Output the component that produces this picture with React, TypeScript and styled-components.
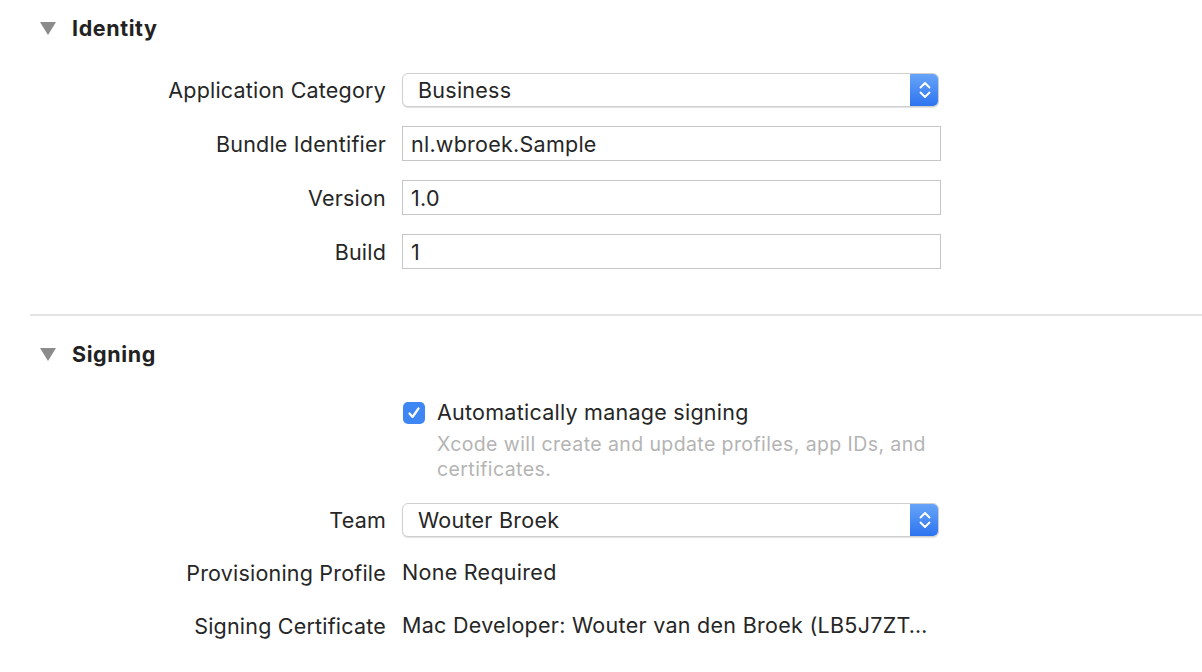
import React from "react";
import styled, { createGlobalStyle } from "styled-components";

const Global = createGlobalStyle`
  html, body {
    margin: 0;
    padding: 0;
    background: #ffffff;
  }
  body {
    font-family: Inter, "Noto Sans", "Liberation Sans", sans-serif;
    color: #262626;
    -webkit-font-smoothing: antialiased;
  }
`;

const Page = styled.div`
  width: 1202px;
  height: 672px;
  overflow: hidden;
  display: flex;
  flex-direction: column;
`;

const SectionHeader = styled.div<{ $top: number }>`
  display: flex;
  align-items: center;
  height: 40px;
  margin-top: ${(p) => p.$top}px;
  padding-left: 40px;
  gap: 16px;
`;

const Disclosure = styled.span`
  width: 0;
  height: 0;
  border-left: 8.5px solid transparent;
  border-right: 8.5px solid transparent;
  border-top: 13px solid #8b8b8b;
`;

const Title = styled.h2`
  margin: 0;
  font-size: 21.5px;
  font-weight: 700;
  color: #222222;
  letter-spacing: 0.6px;
`;

const Divider = styled.hr`
  margin: 45px 0 0 30px;
  border: none;
  height: 2px;
  background: #e4e4e4;
`;

const Form = styled.div<{ $top: number; $gap: number }>`
  display: grid;
  grid-template-columns: 386px 539px;
  column-gap: 16px;
  row-gap: ${(p) => p.$gap}px;
  margin-top: ${(p) => p.$top}px;
  align-items: center;
`;

const Label = styled.div`
  font-size: 21.5px;
  letter-spacing: 0.2px;
  text-align: right;
  color: #262626;
  white-space: nowrap;
`;

const Popup = styled.div`
  position: relative;
  width: 537px;
  height: 34px;
  box-sizing: border-box;
  border: 1px solid #cfcfcf;
  border-radius: 6px;
  background: #ffffff;
  box-shadow: 0 1px 1px rgba(0, 0, 0, 0.12);
  display: flex;
  align-items: center;
  overflow: hidden;
`;

const PopupText = styled.span`
  flex: 1;
  padding-left: 15px;
  font-size: 21.5px;
  letter-spacing: 0.25px;
  color: #262626;
`;

const Stepper = styled.span`
  width: 29px;
  align-self: stretch;
  margin: -1px -1px -1px 0;
  background: linear-gradient(#69a6f8, #2b72ef);
  display: flex;
  align-items: center;
  justify-content: center;
`;

const Field = styled.div`
  height: 35px;
  box-sizing: border-box;
  border: 1px solid #c6c6c6;
  background: #ffffff;
  padding-left: 8px;
  display: flex;
  align-items: center;
  font-size: 21.5px;
  letter-spacing: 0.25px;
  color: #262626;
`;

const Value = styled.div`
  font-size: 21.5px;
  letter-spacing: 0.28px;
  color: #262626;
  white-space: nowrap;
  overflow: hidden;
  text-overflow: ellipsis;
  height: 35px;
  line-height: 35px;
`;

const CheckBlock = styled.div`
  display: grid;
  grid-template-columns: 22px auto;
  column-gap: 12px;
  row-gap: 7px;
  margin-left: 403px;
  margin-top: 26px;
  width: 540px;
`;

const Check = styled.span`
  width: 22px;
  height: 22px;
  border-radius: 5px;
  background: #3f86f5;
  display: flex;
  align-items: center;
  justify-content: center;
  align-self: center;
`;

const CheckLabel = styled.div`
  font-size: 21.5px;
  letter-spacing: 0.25px;
  line-height: 25px;
  color: #262626;
`;

const Hint = styled.div`
  grid-column: 2;
  font-size: 19.5px;
  letter-spacing: 0.4px;
  line-height: 25px;
  color: #b4b4b4;
`;

const Chevrons = () => (
  <svg width="14" height="24" viewBox="0 0 14 24" fill="none">
    <path d="M2.5 9.5 L7 5 L11.5 9.5" stroke="#fff" strokeWidth="1.9" strokeLinecap="round" strokeLinejoin="round" />
    <path d="M2.5 14.5 L7 19 L11.5 14.5" stroke="#fff" strokeWidth="1.9" strokeLinecap="round" strokeLinejoin="round" />
  </svg>
);

const Tick = () => (
  <svg width="16" height="16" viewBox="0 0 16 16" fill="none">
    <path d="M3.5 8.5 L6.5 12 L12.5 3.5" stroke="#fff" strokeWidth="2.2" strokeLinecap="round" strokeLinejoin="round" />
  </svg>
);

const PopupButton = ({ value }: { value: string }) => (
  <Popup>
    <PopupText>{value}</PopupText>
    <Stepper>
      <Chevrons />
    </Stepper>
  </Popup>
);

export default function App() {
  return (
    <Page>
      <Global />
      <SectionHeader $top={8}>
        <Disclosure />
        <Title>Identity</Title>
      </SectionHeader>
      <Form $top={25} $gap={19}>
        <Label>Application Category</Label>
        <PopupButton value="Business" />
        <Label>Bundle Identifier</Label>
        <Field>nl.wbroek.Sample</Field>
        <Label>Version</Label>
        <Field>1.0</Field>
        <Label>Build</Label>
        <Field>1</Field>
      </Form>
      <Divider />
      <SectionHeader $top={18}>
        <Disclosure />
        <Title>Signing</Title>
      </SectionHeader>
      <CheckBlock>
        <Check>
          <Tick />
        </Check>
        <CheckLabel>Automatically manage signing</CheckLabel>
        <Hint>Xcode will create and update profiles, app IDs, and certificates.</Hint>
      </CheckBlock>
      <Form $top={21} $gap={18}>
        <Label>Team</Label>
        <PopupButton value="Wouter Broek" />
        <Label>Provisioning Profile</Label>
        <Value>None Required</Value>
        <Label>Signing Certificate</Label>
        <Value>Mac Developer: Wouter van den Broek (LB5J7ZT…</Value>
      </Form>
    </Page>
  );
}
